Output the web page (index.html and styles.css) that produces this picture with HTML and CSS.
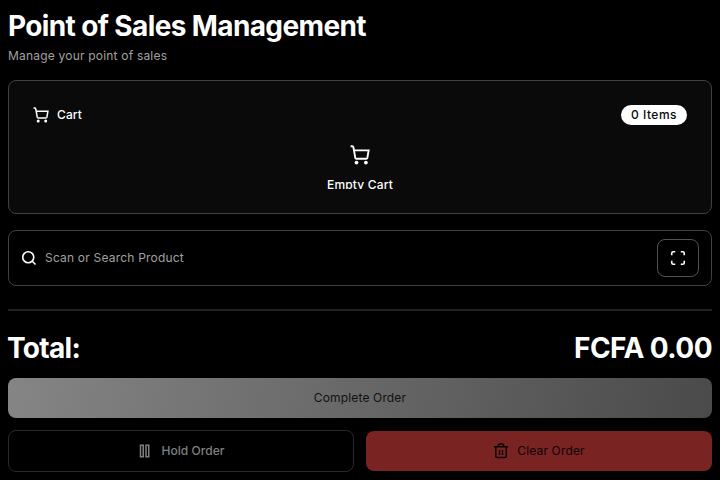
FILE: index.html
```html
<!DOCTYPE html>
<html lang="en">
<head>
<meta charset="utf-8">
<title>Point of Sales Management</title>
<link rel="stylesheet" href="styles.css">
</head>
<body>
<svg class="sprite" aria-hidden="true">
  <symbol id="cart" viewBox="0 0 16 16"><path fill="none" stroke="currentColor" stroke-width="1.5" d="M.5 1h1.200a1 1 0 0 1 1 .8L3.200 4.250 4.200 10.200a1 1 0 0 0 1 .8h7.700a1 1 0 0 0 1-.8l1-5.950H3.200"/><circle cx="5.200" cy="14" r="1.500" fill="currentColor"/><circle cx="12.700" cy="14" r="1.500" fill="currentColor"/></symbol>
</svg>
<main class="page">
  <header>
    <h1 class="title">Point of Sales Management</h1>
    <p class="subtitle"><span>Manage your point of sales</span></p>
  </header>
  <section class="card">
    <div class="card-head">
      <div class="card-title"><svg class="icon"><use href="#cart"/></svg><span>Cart</span></div>
      <span class="badge">0 Items</span>
    </div>
    <div class="empty"><svg class="icon-lg"><use href="#cart"/></svg><p class="empty-text">Empty Cart</p></div>
  </section>
  <div class="search">
    <svg class="icon" viewBox="0 0 16 16" fill="none" stroke="currentColor" stroke-width="1.600"><circle cx="7.250" cy="7.250" r="5.500"/><path d="m11 11 3.500 3.500"/></svg>
    <span class="placeholder">Scan or Search Product</span>
    <button class="scan" aria-label="Scan"><svg class="icon" viewBox="0 0 16 16" fill="none" stroke="currentColor" stroke-width="1.600"><path d="M1.750 5.200v-1.950a1.500 1.500 0 0 1 1.500-1.500H5.200M10.800 1.750h1.950a1.500 1.500 0 0 1 1.500 1.500V5.200M14.250 10.800v1.950a1.500 1.500 0 0 1-1.500 1.500H10.800M5.200 14.250H3.250a1.500 1.500 0 0 1-1.500-1.500V10.800"/></svg></button>
  </div>
  <hr class="rule">
  <div class="total"><span class="total-label">Total:</span><span class="amount">FCFA 0.00</span></div>
  <button class="btn complete">Complete Order</button>
  <div class="actions">
    <button class="btn hold"><svg class="icon" viewBox="0 0 16 16" fill="none" stroke="currentColor" stroke-width="1.500"><path d="M3.500 2.250h2.750v11.500h-2.750zM9 2.250h2.750v11.500h-2.750z"/></svg><span>Hold Order</span></button>
    <button class="btn clear"><svg class="icon" viewBox="0 0 16 16" fill="none" stroke="currentColor" stroke-width="1.500"><path d="M1 3.750h14M5 3.500l.7-2q.2-.5.8-.5h3q.6 0 .8.500l.7 2M2.750 4v9q0 1.500 1.500 1.500h7.500q1.500 0 1.500-1.500V4M6.500 7v5M9.500 7v5"/></svg><span>Clear Order</span></button>
  </div>
</main>
</body>
</html>
```
FILE: styles.css
```css
* { box-sizing: border-box; }
body { margin: 0; background: #000; color: #fff; font: 500 12px/16px Inter, sans-serif; }
h1, p { margin: 0; }
button { font: inherit; color: inherit; margin: 0; padding: 0; }
svg { display: block; flex: none; }
.sprite { position: absolute; width: 0; height: 0; }
.icon { width: 16px; height: 16px; }
.icon-lg { width: 20px; height: 20px; }
.page { display: flex; flex-direction: column; height: 480px; padding: 8px 8px 0; }
.title { font-size: 28px; line-height: 36px; font-weight: 700; letter-spacing: -.62px; }
.subtitle { margin-top: 4px; font-weight: 400; color: #a1a1a1; letter-spacing: .2px; }
.card { height: 134px; margin-top: 16px; padding: 24px; border: 1px solid #404040; border-radius: 8px; background: #0a0a0a; }
.card-head { display: flex; align-items: center; justify-content: space-between; height: 20px; }
.card-title { display: flex; align-items: center; gap: 8px; letter-spacing: .1px; }
.badge { display: flex; align-items: center; justify-content: center; width: 66px; height: 20px; border-radius: 10px; background: #fff; color: #0a0a0a; letter-spacing: .5px; }
.empty { display: flex; flex-direction: column; align-items: center; height: 64px; padding-top: 20px; overflow: hidden; }
.empty-text { margin-top: 12px; letter-spacing: .15px; }
.search { display: flex; align-items: center; height: 56px; margin-top: 16px; padding: 0 12px; border: 1px solid #404040; border-radius: 8px; }
.placeholder { flex: 1; margin-left: 8px; font-weight: 400; color: #a1a1a1; letter-spacing: .2px; }
.scan { display: grid; place-items: center; width: 42px; height: 38px; border: 1px solid #525252; border-radius: 8px; background: #000; }
.rule { width: 100%; height: 2px; margin: 23px 0 0; border: 0; background: #222; }
.total { display: flex; justify-content: space-between; margin-top: 19px; font-size: 28px; line-height: 36px; font-weight: 700; letter-spacing: -.7px; }
.total-label { margin-left: -1px; }
.amount { letter-spacing: -.55px; }
.btn { display: flex; align-items: center; justify-content: center; gap: 8px; height: 40px; border: 0; border-radius: 8px; }
.complete { flex: none; margin-top: 12px; background: linear-gradient(100deg, #858585, #4a4a4a); color: #111; font-weight: 400; letter-spacing: .15px; }
.actions { display: grid; grid-template-columns: 1fr 1fr; align-items: center; gap: 12px; margin-top: 12px; }
.hold { height: 42px; border: 1px solid #292929; background: #000; color: #808080; letter-spacing: .05px; }
.clear { background: #792323; color: #0d0404; font-weight: 400; letter-spacing: .15px; }
```
